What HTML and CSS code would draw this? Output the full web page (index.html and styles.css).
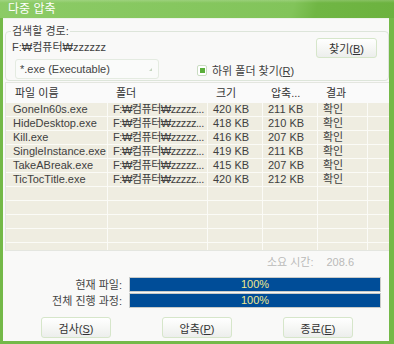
FILE: index.html
```html
<!DOCTYPE html>
<html lang="ko">
<head>
    <meta charset="UTF-8">
    <title>다중 압축</title>
    <link rel="stylesheet" href="styles.css">
</head>
<body>

    <div class="window">
        <div class="titlebar">다중 압축</div>

        <div class="client">
            <fieldset class="search">
                <legend>검색할 경로:</legend>
                <div class="search-row">
                    <span class="path">F:₩컴퓨터₩zzzzzz</span>
                    <button class="btn btn-find">찾기(<u>B</u>)</button>
                </div>
                <div class="search-row row-filter">
                    <div class="combo">*.exe (Executable)<span class="combo-arrow"></span></div>
                    <label class="check">
                        <span class="check-box"><span class="check-mark"></span></span>
                        <span>하위 폴더 찾기(<u>R</u>)</span>
                    </label>
                </div>
            </fieldset>

            <div class="list">
                <div class="list-row list-head">
                    <div class="cell">파일 이름</div>
                    <div class="cell">폴더</div>
                    <div class="cell">크기</div>
                    <div class="cell">압축...</div>
                    <div class="cell">결과</div>
                    <div class="cell"></div>
                </div>
                <div class="list-body" id="list-body"></div>
            </div>

            <div class="elapsed">소요 시간: <span class="elapsed-value">208.6</span></div>

            <div class="progress">
                <span class="progress-label">현재 파일:</span>
                <div class="bar">100%</div>
                <span class="progress-label">전체 진행 과정:</span>
                <div class="bar">100%</div>
            </div>

            <div class="buttons">
                <button class="btn">검사(<u>S</u>)</button>
                <button class="btn">압축(<u>P</u>)</button>
                <button class="btn">종료(<u>E</u>)</button>
            </div>
        </div>
    </div>

    <script>
        // file trovati nella cartella
        const files = [
            ['GoneIn60s.exe', '420 KB', '211 KB'],
            ['HideDesktop.exe', '418 KB', '210 KB'],
            ['Kill.exe', '416 KB', '207 KB'],
            ['SingleInstance.exe', '419 KB', '211 KB'],
            ['TakeABreak.exe', '415 KB', '207 KB'],
            ['TicTocTitle.exe', '420 KB', '212 KB']
        ];

        const body = document.getElementById('list-body');
        for (let i = 0; i < 11; i++) {
            const f = files[i];
            const row = document.createElement('div');
            row.className = 'list-row';
            if (f) {
                row.innerHTML = `
                    <div class="cell">${f[0]}</div>
                    <div class="cell cell-folder">F:₩컴퓨터₩zzzzz...</div>
                    <div class="cell">${f[1]}</div>
                    <div class="cell">${f[2]}</div>
                    <div class="cell">확인</div>
                    <div class="cell"></div>`;
            } else {
                row.innerHTML = '<div class="cell"></div>'.repeat(6);
            }
            body.appendChild(row);
        }
    </script>

</body>
</html>
```

FILE: styles.css
```css
* {
    box-sizing: border-box;
}

body {
    margin: 0;
    font-family: "Liberation Sans", "Noto Sans CJK KR", sans-serif;
    font-size: 11px;
    color: #404040;
}

.window {
    width: 394px;
    height: 344px;
    background: #74b948;
    padding: 0 5px 3px 3px;
    display: flex;
    flex-direction: column;
}

.titlebar {
    height: 18px;
    line-height: 18px;
    margin: 0 -5px 0 -3px;
    padding-left: 8px;
    color: #fff;
    font-size: 12px;
    background:
        linear-gradient(to bottom, rgba(255, 255, 255, 0.18), rgba(255, 255, 255, 0) 3px),
        linear-gradient(105deg, #8ccb66 0%, #82c45a 74%, #70b644 80%, #6cb23f 100%);
}

.client {
    flex: 1;
    background: #f9f9f8;
    border-top: 1px solid #eef2ec;
    overflow: hidden;
}

/* gruppo percorso */
.search {
    margin: 5px 0 0 2px;
    padding: 0 11px 1px 6px;
    border: 1px solid #dde5da;
    border-radius: 4px;
    min-width: 0;
}

.search legend {
    padding: 0 1px;
    margin-left: -1px;
    line-height: 14px;
}

.search-row {
    display: flex;
    align-items: flex-start;
}

.row-filter {
    margin-top: 1px;
    align-items: center;
}

.path {
    line-height: 14px;
    padding-top: 2px;
    flex: 1;
}

.btn {
    font-family: inherit;
    font-size: 11px;
    color: #333;
    height: 21px;
    width: 70px;
    padding: 0;
    border: 1px solid #d6e6ca;
    border-radius: 3px;
    background: linear-gradient(to bottom, #ffffff, #f6f7f5 50%, #eceeec);
}

.btn u {
    text-underline-offset: 1px;
}

.btn-find {
    width: 61px;
    height: 20px;
}

.combo {
    position: relative;
    width: 144px;
    height: 20px;
    line-height: 18px;
    margin-left: 3px;
    padding-left: 4px;
    border: 1px solid #e4ebe1;
    border-radius: 3px;
    background: #fafbfa;
    color: #444;
}

.combo-arrow {
    position: absolute;
    right: 6px;
    top: 8px;
    border-left: 3px solid transparent;
    border-bottom: 3px solid #c5d6bf;
}

.check {
    display: flex;
    align-items: center;
    margin-left: 38px;
    margin-top: 2px;
    gap: 5px;
}

.check-box {
    width: 10px;
    height: 11px;
    border: 1px solid #cadcc2;
    border-radius: 2px;
    background: #fff;
    display: flex;
    align-items: center;
    justify-content: center;
}

.check-mark {
    width: 5px;
    height: 5px;
    background: #5aae3a;
}

/* lista file */
.list {
    margin: 1px 0 0 2px;
    border: 1px solid #e4e6e0;
    border-right: none;
}

.list-row {
    display: grid;
    grid-template-columns: 102px 100px 55px 55px 50px 1fr;
    height: 14px;
    line-height: 13px;
    background: #efede1;
}

.list-row .cell {
    border-right: 1px solid #fbfbf7;
    border-bottom: 1px solid #fbfbf7;
    padding-left: 5px;
    white-space: nowrap;
    overflow: hidden;
}

.list-row .cell:first-child {
    padding-left: 7px;
}

.list-row .cell:last-child {
    border-right: none;
}

.list-row .cell-folder {
    letter-spacing: -0.45px;
}

.list-head {
    height: 20px;
    line-height: 20px;
    background: #fafafa;
    color: #333;
}

.list-head .cell {
    border: none;
    padding-left: 8px;
}

.list-head .cell:first-child {
    padding-left: 9px;
}

.list-body {
    height: 147px;
    overflow: hidden;
}

.elapsed {
    display: flex;
    justify-content: flex-end;
    gap: 13px;
    margin-top: 4px;
    padding-right: 35px;
    line-height: 14px;
    color: #b9b9b9;
}

/* barre di avanzamento */
.progress {
    display: grid;
    grid-template-columns: 119px 252px;
    column-gap: 7px;
    margin-top: 7px;
    align-items: center;
}

.progress-label {
    text-align: right;
    color: #444;
}

.bar {
    height: 15px;
    line-height: 13px;
    border: 1px solid #c9cbc9;
    background: #004d98;
    color: #efe88c;
    text-align: center;
}

.buttons {
    display: flex;
    gap: 51px;
    margin-top: 9px;
    padding-left: 38px;
}
```
